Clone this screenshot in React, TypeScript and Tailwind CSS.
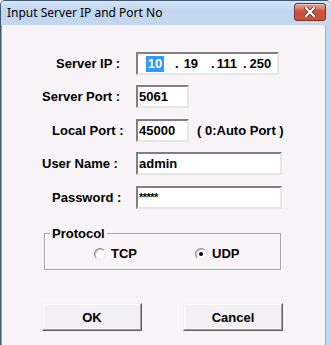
import React from "react";

const sunken =
  "bg-white border-2 border-t-[#7f7f7f] border-l-[#7f7f7f] border-b-[#e6e6e6] border-r-[#e6e6e6] h-[23px] flex items-center";

function Row({
  label,
  pl,
  mt,
  children,
}: {
  label: string;
  pl: string;
  mt: string;
  children: React.ReactNode;
}) {
  return (
    <div className={`flex items-center ${mt}`}>
      <div className={`w-[134px] shrink-0 ${pl} whitespace-nowrap`}>{label}</div>
      {children}
    </div>
  );
}

function Radio({ checked }: { checked?: boolean }) {
  return (
    <span className="relative inline-block w-[12px] h-[12px] rounded-full bg-white border border-t-[#8a8a8a] border-l-[#8a8a8a] border-b-[#e8e8e8] border-r-[#e8e8e8] shadow-[inset_1px_1px_0_#c8c8c8]">
      {checked && (
        <span className="absolute left-[3px] top-[3px] w-[4px] h-[4px] rounded-full bg-black" />
      )}
    </span>
  );
}

export default function App() {
  return (
    <div
      className="w-[331px] h-[345px] flex flex-col bg-[#c3d6ee] border-t border-l border-[#3f5770] rounded-tl-[5px] rounded-tr-[5px] overflow-hidden"
      style={{ fontFamily: '"Liberation Sans", Arial, sans-serif' }}
    >
      {/* Title bar */}
      <div className="h-[24px] shrink-0 flex items-center justify-between bg-[#c2d6ee] shadow-[inset_0_8px_6px_-4px_#d8e6f6] pl-[6px] pr-[5px]">
        <span
          className="text-[12px] text-black leading-none"
          style={{ fontFamily: '"Noto Sans", "Open Sans", sans-serif' }}
        >
          Input Server IP and Port No
        </span>
        <div className="w-[32px] h-[18px] mt-[-2px] rounded-[3px] border border-[#7a2d25] bg-[#c9533f] shadow-[inset_0_1px_0_#f3c7bf,inset_0_7px_3px_-2px_#e3907f] flex items-center justify-center">
          <svg width="12" height="10" viewBox="0 0 12 10">
            <path
              d="M2 1 L10 9 M10 1 L2 9"
              stroke="#5a1f18"
              strokeWidth="3.6"
              strokeLinecap="square"
            />
            <path
              d="M2 1 L10 9 M10 1 L2 9"
              stroke="#ffffff"
              strokeWidth="2.2"
              strokeLinecap="square"
            />
          </svg>
        </div>
      </div>

      {/* Body */}
      <div className="flex-1 flex">
        <div className="w-[1px] bg-[#7fa4cf]" />
        <div className="w-[323px] bg-[#f7f3f7] text-[13px] font-bold text-black leading-none pt-[27px]">
          <Row label="Server IP :" pl="pl-[54px]" mt="mt-0">
            <div className={`${sunken} w-[143px]`}>
              <span className="ml-[8px] w-[18px] h-[16px] bg-[#3399ff] text-white flex items-center justify-center">
                10
              </span>
              <span className="ml-[11px]">.</span>
              <span className="ml-[5px]">19</span>
              <span className="ml-[13px]">.</span>
              <span className="ml-[2px]">111</span>
              <span className="ml-[6px]">.</span>
              <span className="ml-[3px]">250</span>
            </div>
          </Row>
          <Row label="Server Port :" pl="pl-[40px]" mt="mt-[10px]">
            <div className={`${sunken} w-[53px] pl-[1px]`}>5061</div>
          </Row>
          <Row label="Local Port :" pl="pl-[50px]" mt="mt-[11px]">
            <div className={`${sunken} w-[53px] pl-[1px]`}>45000</div>
            <span className="ml-[8px] whitespace-pre">( 0:Auto Port )</span>
          </Row>
          <Row label="User Name :" pl="pl-[40px]" mt="mt-[10px]">
            <div className={`${sunken} w-[146px] pl-[1px]`}>admin</div>
          </Row>
          <Row label="Password :" pl="pl-[50px]" mt="mt-[11px]">
            <div className={`${sunken} w-[146px] pl-[1px] text-[11px] tracking-[-0.5px]`}>
              *****
            </div>
          </Row>

          {/* Protocol group */}
          <div className="relative ml-[42px] mt-[24px] w-[237px] h-[37px] border border-[#a3a3a3] shadow-[inset_1px_1px_0_#ffffff,1px_1px_0_#ffffff]">
            <span className="absolute left-[5px] top-[-8px] px-[2px] bg-[#f7f3f7] leading-[15px]">
              Protocol
            </span>
            <div className="flex items-center h-full pt-[4px]">
              <div className="ml-[49px] flex items-center">
                <Radio />
                <span className="ml-[5px]">TCP</span>
              </div>
              <div className="ml-[58px] flex items-center">
                <Radio checked />
                <span className="ml-[5px]">UDP</span>
              </div>
            </div>
          </div>

          {/* Buttons */}
          <div className="flex mt-[33px] ml-[40px] gap-[41px]">
            <button className="w-[100px] h-[28px] bg-[#f2f0f2] border border-t-[#f0f0f0] border-l-[#f0f0f0] border-b-[#5f5f5f] border-r-[#5f5f5f] shadow-[inset_-1px_-1px_0_#a0a0a0,inset_1px_1px_0_#ffffff] font-bold">
              OK
            </button>
            <button className="w-[100px] h-[28px] bg-[#f2f0f2] border border-t-[#f0f0f0] border-l-[#f0f0f0] border-b-[#5f5f5f] border-r-[#5f5f5f] shadow-[inset_-1px_-1px_0_#a0a0a0,inset_1px_1px_0_#ffffff] font-bold">
              Cancel
            </button>
          </div>
        </div>
        <div className="w-[1px] bg-[#8fb2da]" />
        <div className="flex-1 bg-[#c3d6ee]" />
      </div>
    </div>
  );
}
